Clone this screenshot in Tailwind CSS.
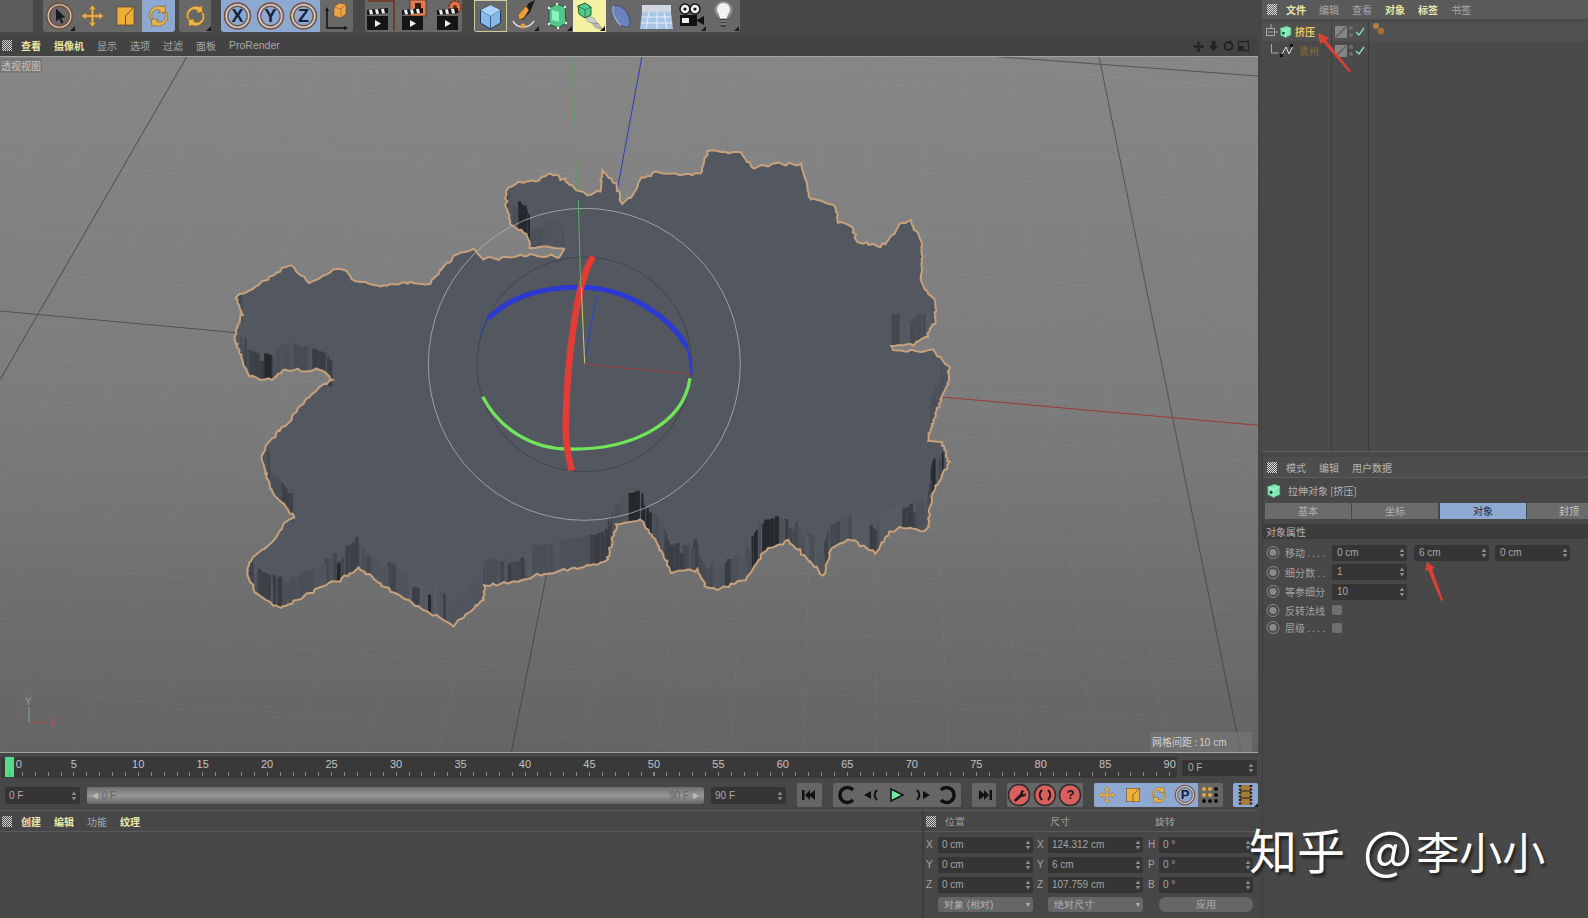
<!DOCTYPE html>
<html lang="zh">
<head>
<meta charset="UTF-8">
<title>Cinema 4D</title>
<script src="https://cdn.jsdelivr.net/npm/@tailwindcss/browser@4"></script>
</head>
<body class="w-[1588px] h-[918px] overflow-hidden relative bg-[#474747] font-['Noto_Sans_CJK_SC','Liberation_Sans',sans-serif] text-[10px] text-[#a9a9a9]">

<!-- shared icons -->
<svg width="0" height="0" class="absolute">
  <defs>
    <symbol id="cross" viewBox="0 0 33 32"><path d="M16.5 5l3.5 4.5h-2.2v5.2H23V12.500l4.500 3.500-4.500 3.500v-2.200h-5.200v5.200H20L16.500 27 13 22.500h2.200v-5.200H10v2.200L5.500 16 10 12.500v2.200h5.200V9.500H13z" fill="#eab04e" stroke="#8a6426" stroke-width=".5"/></symbol>
    <symbol id="scale" viewBox="0 0 33 32"><rect x="8" y="7" width="17" height="18" fill="#eeae3c" stroke="#5a4420" stroke-width=".7"/><path d="M16.500 25v-9L25 7" fill="none" stroke="#6b5020" stroke-width="1"/></symbol>
    <symbol id="rotate" viewBox="0 0 33 32"><path d="M8 19a9.500 9.500 0 0 1 13-12l2-2 .8 8-7.300-.5 2-1.800A5 5 0 0 0 12 20z" fill="#e9b44c" stroke="#76592a" stroke-width=".6"/><path d="M25 13a9.500 9.500 0 0 1-13 12l-2 2-.8-8 7.300.5-2 1.800A5 5 0 0 0 21 12z" fill="#e9b44c" stroke="#76592a" stroke-width=".6"/></symbol>
    <symbol id="ring" viewBox="0 0 33 32"><circle cx="16.500" cy="16" r="13" fill="none" stroke="#7e4f37" stroke-width="1.500"/><circle cx="16.500" cy="16" r="11.300" fill="none" stroke="#d8d0c0" stroke-width="1.100"/><circle cx="16.500" cy="16" r="9.700" fill="none" stroke="#7e4f37" stroke-width="1.200"/></symbol>
    <symbol id="clap" viewBox="0 0 33 32"><rect x="2" y="16" width="21" height="14" fill="#151515"/><path d="M2 10l21-2v5l-21 2z" fill="#151515"/><path d="M4 10l3-.3 1 4.600-3 .3zM10 9.500l3-.3 1 4.500-3 .3zM16 9l3-.3 1 4.500-3 .3z" fill="#eee"/><path d="M10 20l6 3.500-6 3.500z" fill="#eee"/></symbol>
    <symbol id="spin" viewBox="0 0 6 10"><path d="M3 .5L5.300 4H.7zM3 9.500L.7 6h4.600z" fill="#8d8d8d"/></symbol>
    <symbol id="redbtn" viewBox="0 0 24 24"><circle cx="12" cy="12" r="10.500" fill="#d9605e" stroke="#2a2a2a" stroke-width="1.500"/></symbol>
    <symbol id="greencube" viewBox="0 0 14 14"><path d="M1.500 3.500L8 1l5 2v8l-6 2.500-5.500-2.500z" fill="#7ee8b0" stroke="#3f8a62" stroke-width=".6"/><path d="M1.500 3.500L7 6l6-3M7 6v7.500" fill="none" stroke="#b8f6d4" stroke-width=".7"/><path d="M3.500 7.500h2.500v2.500H3.500z" fill="#20382c"/></symbol>
    <symbol id="corner" viewBox="0 0 33 32"><path d="M32 31h-5l5-5z" fill="#1c1c1c"/></symbol>
  </defs>
</svg>

<div class="flex h-full">
  <!-- left column -->
  <div class="w-[1258px] shrink-0 flex flex-col">
    <!-- top toolbar -->
    <div class="h-[36px] bg-[#484848] flex items-start pl-0 text-[#111]">
      <div class="w-[33px] h-[32px] bg-[#5d5d5d] rounded-br-[3px]"></div>
      <div class="flex ml-[10px] rounded-b-[3px] overflow-hidden">
        <div class="relative w-[33px] h-[32px] bg-[#686868]">
          <svg width="33" height="32" class="absolute inset-0"><use href="#ring"/><path d="M13 8.500l9.500 9-4.200.3 2.200 5-2 .9-2.200-5-3.300 2.700z" fill="#1a1a1a"/><use href="#corner"/></svg>
        </div>
        <div class="w-[33px] h-[32px] bg-[#686868]"><svg width="33" height="32"><use href="#cross"/></svg></div>
        <div class="w-[33px] h-[32px] bg-[#686868]"><svg width="33" height="32"><use href="#scale"/></svg></div>
        <div class="w-[33px] h-[32px] bg-[#8ea9d1]"><svg width="33" height="32"><use href="#rotate"/></svg></div>
      </div>
      <div class="w-[32px] h-[32px] ml-[4px] bg-[#686868] rounded-b-[3px]"><svg width="33" height="32"><use href="#rotate"/><use href="#corner"/></svg></div>
      <div class="flex ml-[10px] rounded-b-[3px] overflow-hidden">
        <div class="relative w-[33px] h-[32px] bg-[#8ea9d1] flex items-center justify-center font-bold text-[18px] font-['Liberation_Sans'] text-[#10223c]"><svg width="33" height="32" class="absolute inset-0"><use href="#ring"/></svg><span class="relative">X</span></div>
        <div class="relative w-[33px] h-[32px] bg-[#8ea9d1] flex items-center justify-center font-bold text-[18px] font-['Liberation_Sans'] text-[#10223c]"><svg width="33" height="32" class="absolute inset-0"><use href="#ring"/></svg><span class="relative">Y</span></div>
        <div class="relative w-[33px] h-[32px] bg-[#8ea9d1] flex items-center justify-center font-bold text-[18px] font-['Liberation_Sans'] text-[#10223c]"><svg width="33" height="32" class="absolute inset-0"><use href="#ring"/></svg><span class="relative">Z</span></div>
        <div class="w-[33px] h-[32px] bg-[#686868]"><svg width="33" height="32"><path d="M7 9v19h19" fill="none" stroke="#111" stroke-width="1.500"/><path d="M7 7l-2 4h4zM28 28l-4-2v4z" fill="#111"/><path d="M14 7l5-4 7 1v10l-5 4-7-2z" fill="#eba44a" stroke="#6a4a1e" stroke-width=".6"/><path d="M14 7l7 2 5-5M21 9v9" fill="none" stroke="#8a5e24" stroke-width=".6"/></svg></div>
      </div>
      <div class="flex ml-[12px] rounded-b-[3px] overflow-hidden">
        <div class="w-[35px] h-[32px] bg-[#686868]"><svg width="33" height="32"><path d="M3 1h26v30" fill="none" stroke="#6f3d2c" stroke-width="2"/><use href="#clap"/></svg></div>
        <div class="w-[35px] h-[32px] bg-[#686868]"><svg width="33" height="32"><rect x="10" y="0" width="16" height="16" fill="#e07a4f" stroke="#222" stroke-width=".6"/><rect x="15" y="3" width="6" height="7" fill="#3a1a10"/><use href="#clap"/></svg></div>
        <div class="w-[27px] h-[32px] bg-[#686868]"><svg width="27" height="32"><circle cx="20" cy="7" r="6" fill="#e0764a" stroke="#7a3a20" stroke-width="1.800" stroke-dasharray="2.500 1.200"/><circle cx="20" cy="7" r="2" fill="#5a2c18"/><use href="#clap" width="33" height="32"/></svg></div>
      </div>
      <div class="flex ml-[12px] rounded-b-[3px] overflow-hidden">
        <div class="w-[33px] h-[32px] bg-[#686868] border border-[#cfc8a0]"><svg width="31" height="30"><path d="M15.500 4l10 5v13l-10 6-10-6V9z" fill="#86b8e8" stroke="#22364e" stroke-width="1"/><path d="M5.500 9l10 6 10-6M15.500 15v13" fill="none" stroke="#2a4664" stroke-width=".8"/><path d="M15.500 4l10 5-10 6-10-6z" fill="#a8d0f4"/></svg></div>
        <div class="w-[33px] h-[32px] bg-[#686868]"><svg width="33" height="32"><path d="M22 3l6-3-5 12-7 8-4-4z" fill="#1a1a1a"/><path d="M19 6l-8 9 1 5 5-2 5-8z" fill="#e8a03c" stroke="#6a3a10" stroke-width=".6"/><path d="M6 21c4 8 16 8 21 0" fill="none" stroke="#eee" stroke-width="1.400"/><circle cx="16" cy="26" r="2.500" fill="#e3a341"/><use href="#corner"/></svg></div>
        <div class="w-[33px] h-[32px] bg-[#686868]"><svg width="33" height="32"><path d="M9 8l8-4 8 3 1 16-8 5-9-4z" fill="#52c68a" stroke="#1f5a3e"/><path d="M12 10l7 2v10l-7-2z" fill="#8ef0bc"/><g fill="#eee"><circle cx="9" cy="8" r="1.200"/><circle cx="17" cy="4" r="1.200"/><circle cx="25" cy="7" r="1.200"/><circle cx="26" cy="23" r="1.200"/><circle cx="18" cy="28" r="1.200"/><circle cx="9" cy="24" r="1.200"/></g><use href="#corner"/></svg></div>
        <div class="w-[33px] h-[32px] bg-[#f4f2a2]"><svg width="33" height="32"><path d="M16 20l9 3 4 6-6-1z" fill="#bbb" stroke="#555" stroke-width=".4"/><path d="M12 15l9 3 3 6-9-2z" fill="#ccc" stroke="#666" stroke-width=".4"/><path d="M5 6l7-3 6 4v8l-6 3-6-4z" fill="#55c98b" stroke="#1f5a3e"/><path d="M5 6l7 4 6-3M12 10v8" fill="none" stroke="#1f5a3e" stroke-width=".7"/><use href="#corner"/></svg></div>
        <div class="w-[34px] h-[32px] bg-[#686868]"><svg width="33" height="32"><path d="M8 6c7-3 17 8 16 18-1 4-5 4-9 1C9 21 5 10 8 6z" fill="#6c82bc" stroke="#2c3860" stroke-width=".7"/><path d="M8 6c-3 4 1 15 7 19" fill="none" stroke="#9fb2e0" stroke-width="1.300"/></svg></div>
        <div class="w-[34px] h-[32px] bg-[#686868]"><svg width="33" height="32"><path d="M2 12h29V5H2z" fill="#cfd6de"/><path d="M2 12h29l2 17H0z" fill="#a9c6e8"/><path d="M2 17h29M1 23h31M9 12L6 29M17 12v17M24 12l3 17" stroke="#eef2f8" stroke-width=".9" fill="none"/></svg></div>
        <div class="w-[33px] h-[32px] bg-[#686868]"><svg width="33" height="32"><circle cx="11" cy="9" r="5" fill="#eee" stroke="#111" stroke-width="1.500"/><circle cx="21" cy="9" r="5" fill="#eee" stroke="#111" stroke-width="1.500"/><circle cx="11" cy="9" r="1.600" fill="#111"/><circle cx="21" cy="9" r="1.600" fill="#111"/><rect x="6" y="15" width="17" height="11" fill="#111"/><rect x="8" y="18" width="7" height="5" fill="#eee"/><path d="M23 20l7-4v9l-7-4z" fill="#111"/><use href="#corner"/></svg></div>
        <div class="w-[33px] h-[32px] bg-[#686868]"><svg width="33" height="32"><circle cx="16.500" cy="10" r="9" fill="#fff" opacity=".25"/><path d="M16.500 3c4.500 0 6.500 3.500 6.500 6.500 0 3.500-3 5-3 9h-7c0-4-3-5.500-3-9C10 6.500 12 3 16.500 3z" fill="#f2f2f2"/><path d="M13.500 19h6v6l-1.500 2h-3l-1.500-2z" fill="#3a3a3a"/><path d="M13.500 21h6M13.500 24h6" stroke="#bbb"/><use href="#corner"/></svg></div>
      </div>
    </div>

    <!-- viewport menu -->
    <div class="h-[20px] bg-[#434343] flex items-center pb-[1px]">
      <div class="w-[10px] h-[11px] ml-[2px] bg-[conic-gradient(#d8d8d8_25%,transparent_0_50%,#d8d8d8_0_75%,transparent_0)] bg-[length:2px_2px]"></div>
      <div class="flex gap-[13px] ml-[9px] flex-1 items-center">
        <span class="text-[#e9e6a8] font-bold">查看</span>
        <span class="text-[#e9e6a8] font-bold">摄像机</span>
        <span>显示</span><span>选项</span><span>过滤</span><span>面板</span><span class="font-['Liberation_Sans'] text-[10.500px]">ProRender</span>
      </div>
      <div class="flex gap-[2px] pr-[8px]">
        <svg width="13" height="12"><path d="M6.500 1l2 2.500H7.300v2h2V4.300L12 6.500 9.300 8.700V7.500h-2v2h1.200l-2 2.500-2-2.500h1.200v-2h-2v1.200L1 6.500l2.700-2.200v1.200h2v-2H4.500z" fill="#222"/></svg>
        <svg width="13" height="12"><path d="M6.500 11L2 6h2.500V1h4v5H11z" fill="#222"/></svg>
        <svg width="13" height="12"><circle cx="6.500" cy="6" r="4" fill="none" stroke="#222" stroke-width="1.800"/><path d="M9 0v4H6" fill="#222"/></svg>
        <svg width="13" height="12"><rect x="1.500" y="1.500" width="10" height="9" fill="none" stroke="#222" stroke-width="1.200"/><rect x="1.500" y="6" width="5" height="4.500" fill="#222"/></svg>
      </div>
    </div>

    <!-- viewport -->
    <div class="relative h-[697px] border-t border-b border-[#a4a4a4] bg-gradient-to-b from-[#868686] via-[#7c7c7c] to-[#646464] overflow-hidden">
      <svg id="scene" width="1258" height="695" viewBox="0 57 1258 695" class="absolute inset-0">
        <defs><clipPath id="mapclip"><path id="clipshape"/></clipPath></defs>
        <g id="grid" transform="scale(1.01276)" stroke="#ffffff" stroke-opacity=".04" stroke-width="1"></g>
        <g transform="scale(1.01276)" fill="none" stroke-width="1">
          <path d="M185 55L0 375M0 307L240 329M972 55L1242 75M1085 55L1225 742M540 565L505 742" stroke="#333333" stroke-opacity=".6"/>
          <path d="M930 392L1242 420" stroke="#9c3a3a"/>
          <path d="M634 55L610 185" stroke="#2f3fb4"/>
          <path d="M565 55L572 250" stroke="#5a9c5a" stroke-opacity=".8"/>
        </g>
        <!-- extruded map shape, coordinates from a 750x500 crop at 220,140 -->
        <g transform="translate(220 140) scale(.478 .3333)">
          <path id="mapfill" fill="#525760"/>
          <g id="walls" clip-path="url(#mapclip)"></g>
          <path id="mapline" fill="none" stroke="#c6a17c" stroke-width="2" vector-effect="non-scaling-stroke"/>
        </g>
        <!-- gizmo, coordinates from a 330x330 crop at 420,200 -->
        <g transform="translate(420 200) scale(.3333)" fill="none">
          <circle cx="493" cy="493" r="468" stroke="#b8bab8" stroke-opacity=".75" stroke-width="3"/>
          <circle cx="493" cy="493" r="322" stroke="#3e4146" stroke-width="2.500"/>
          <path d="M493 493L810 522" stroke="#9c3f45" stroke-width="3"/>
          <path d="M497 470L530 285" stroke="#3447b0" stroke-width="4"/>
          <path d="M180 405C190 385 195 370 205 355" stroke="#3444a0" stroke-width="4"/>
          <path d="M205 355C260 300 350 262 480 262C620 262 750 350 800 440" stroke="#2c39d4" stroke-width="15"/>
          <path d="M798 436C808 460 813 490 815 522" stroke="#2c39d4" stroke-width="7"/>
          <path d="M188 590C240 690 340 747 445 747C620 752 790 680 810 535" stroke="#72e45a" stroke-width="10"/>
          <path d="M520 170C470 240 440 480 437 680C437 740 450 790 456 812" stroke="#e23c36" stroke-width="20"/>
          <path d="M475 0L482 262" stroke="#5fae62" stroke-width="3"/>
          <path d="M484 262L494 490" stroke="#d8c860" stroke-width="3"/>
        </g>
        <!-- world axis -->
        <g fill="none" stroke-width="1.200">
          <path d="M29 722V707" stroke="#7f9a8f"/>
          <path d="M29 722L46 723" stroke="#b05050"/>
        </g>
      </svg>
      <div class="absolute left-0 top-[1px] h-[15px] px-[1px] bg-[#777777] rounded-br-[2px] text-[#c6c6c6] leading-[15px]">透视视图</div>
      <div class="absolute left-[25px] top-[640px] text-[#8aa2a0] font-['Liberation_Sans'] leading-none">Y</div>
      <div class="absolute left-[49px] top-[661px] text-[#b05858] font-['Liberation_Sans'] leading-none">X</div>
      <div class="absolute right-[6px] bottom-0 h-[20px] w-[102px] bg-[#7a7a7a]/60 text-[#d0d0d0] leading-[20px] pl-[2px]">网格间距 : <span class="font-['Liberation_Sans']">10 cm</span></div>
    </div>

    <!-- timeline ruler -->
    <div class="h-[28px] pt-[4px] bg-[#474747] flex items-start">
      <div class="relative ml-[1px] w-[1176px] shrink-0 h-[21px] bg-[#393939] overflow-hidden">
        <div class="absolute left-[4px] top-0 w-[9px] h-[20px] bg-[#57d98a]"></div>
        <div class="flex ml-[-24px] h-[14px] items-center font-['Liberation_Sans'] text-[#c2c2c2] text-[11px]">
          <span class="w-[64.47px] shrink-0 text-center pl-[19px]">0</span><span class="w-[64.47px] shrink-0 text-center">5</span><span class="w-[64.47px] shrink-0 text-center">10</span><span class="w-[64.47px] shrink-0 text-center">15</span><span class="w-[64.47px] shrink-0 text-center">20</span><span class="w-[64.47px] shrink-0 text-center">25</span><span class="w-[64.47px] shrink-0 text-center">30</span><span class="w-[64.47px] shrink-0 text-center">35</span><span class="w-[64.47px] shrink-0 text-center">40</span><span class="w-[64.47px] shrink-0 text-center">45</span><span class="w-[64.47px] shrink-0 text-center">50</span><span class="w-[64.47px] shrink-0 text-center">55</span><span class="w-[64.47px] shrink-0 text-center">60</span><span class="w-[64.47px] shrink-0 text-center">65</span><span class="w-[64.47px] shrink-0 text-center">70</span><span class="w-[64.47px] shrink-0 text-center">75</span><span class="w-[64.47px] shrink-0 text-center">80</span><span class="w-[64.47px] shrink-0 text-center">85</span><span class="w-[64.47px] shrink-0 text-center">90</span>
        </div>
        <div class="absolute left-[8px] right-[5px] bottom-[2px] h-[4px] bg-[repeating-linear-gradient(90deg,#8a8a8a_0,#8a8a8a_1px,transparent_1px,transparent_12.89px)]"></div>
      </div>
      <div class="relative ml-[5px] w-[75px] h-[16px] mt-[3px] rounded-[2px] bg-[#353535] pl-[6px] leading-[16px] font-['Liberation_Sans'] text-[#aaa]">0 F<svg width="6" height="10" class="absolute right-[3px] top-[3px]"><use href="#spin"/></svg></div>
    </div>

    <!-- transport row -->
    <div class="h-[30px] bg-[#474747] flex items-center border-b border-[#5c5c5c] pb-[1px] font-['Liberation_Sans']">
      <div class="relative ml-[5px] w-[75px] h-[17px] rounded-[2px] bg-[#353535] pl-[4px] leading-[17px] text-[#aaa]">0 F<svg width="6" height="10" class="absolute right-[3px] top-[4px]"><use href="#spin"/></svg></div>
      <div class="ml-[7px] w-[617px] h-[17px] rounded-[3px] bg-gradient-to-b from-[#6d6d6d] via-[#979797] to-[#666666] flex items-center justify-between px-[4px] text-[#666666]">
        <span><span class="text-[#bdbdbd] text-[8px]">◀</span> 0 F</span><span>90 F <span class="text-[#bdbdbd] text-[8px]">▶</span></span>
      </div>
      <div class="relative ml-[7px] w-[75px] h-[17px] rounded-[2px] bg-[#353535] pl-[4px] leading-[17px] text-[#aaa]">90 F<svg width="6" height="10" class="absolute right-[3px] top-[4px]"><use href="#spin"/></svg></div>

      <div class="ml-[11px] w-[25px] h-[24px] bg-[#666666] rounded-[2px]"><svg width="25" height="24"><path d="M5 7h2.500v10H5zM13 7v4l5-4v10l-5-4v4l-5-5z" fill="#111"/></svg></div>
      <div class="flex ml-[11px] rounded-[2px] overflow-hidden h-[24px]">
        <div class="w-[26px] bg-[#666666]"><svg width="26" height="24"><path d="M20 7a7.500 7.500 0 1 0 0 10" fill="none" stroke="#111" stroke-width="3.500"/></svg></div>
        <div class="w-[25px] bg-[#666666]"><svg width="25" height="24"><path d="M5 12l7-4v8z" fill="#111"/><path d="M18 7c-3 3-3 7 0 10" fill="none" stroke="#111" stroke-width="2"/></svg></div>
        <div class="w-[26px] bg-[#666666]"><svg width="26" height="24"><path d="M7 6l12 6-12 6z" fill="#71e89e" stroke="#111" stroke-width="1.500"/></svg></div>
        <div class="w-[25px] bg-[#666666]"><svg width="25" height="24"><path d="M7 7c3 3 3 7 0 10" fill="none" stroke="#111" stroke-width="2"/><path d="M20 12l-7-4v8z" fill="#111"/></svg></div>
        <div class="w-[26px] bg-[#666666]"><svg width="26" height="24"><path d="M6 7a7.500 7.500 0 1 1 0 10" fill="none" stroke="#111" stroke-width="3.500"/></svg></div>
      </div>
      <div class="ml-[11px] w-[24px] h-[24px] bg-[#666666] rounded-[2px]"><svg width="25" height="24"><path d="M20 7h-2.500v10H20zM12 7v4L7 7v10l5-4v4l5-5z" fill="#111"/></svg></div>
      <div class="flex ml-[11px] rounded-[2px] overflow-hidden h-[24px]">
        <div class="w-[25px] bg-[#666666]"><svg width="25" height="24" viewBox="0 0 25 24"><use href="#redbtn" width="24" height="24"/><path d="M7 17l6-6 1.500-4 3 1-2 2 1.500 1.500 2-1.500-.5 3-4 1-6 5z" fill="#1a1a1a"/></svg></div>
        <div class="w-[26px] bg-[#666666]"><svg width="26" height="24"><use href="#redbtn" width="24" height="24" x="1"/><path d="M10 7c-3 3-3 7 0 10M16 7c3 3 3 7 0 10" fill="none" stroke="#1a1a1a" stroke-width="2"/></svg></div>
        <div class="w-[25px] bg-[#666666] relative flex items-center justify-center font-bold text-[13px] text-[#1a1a1a]"><svg width="25" height="24" class="absolute inset-0"><use href="#redbtn" width="24" height="24"/></svg><span class="relative">?</span></div>
      </div>
      <div class="flex ml-[11px] rounded-[2px] overflow-hidden h-[24px]">
        <div class="w-[26px] bg-[#8ea9d1]"><svg width="26" height="24" viewBox="0 0 33 32"><use href="#cross"/></svg></div>
        <div class="w-[26px] bg-[#8ea9d1]"><svg width="26" height="24" viewBox="0 0 33 32"><use href="#scale"/></svg></div>
        <div class="w-[26px] bg-[#8ea9d1]"><svg width="26" height="24" viewBox="0 0 33 32"><use href="#rotate"/></svg></div>
        <div class="w-[26px] bg-[#8ea9d1] relative flex items-center justify-center font-bold text-[13px] text-[#10223c]"><svg width="26" height="24" viewBox="0 0 33 32" class="absolute inset-0"><use href="#ring"/></svg><span class="relative">P</span></div>
        <div class="w-[25px] bg-[#666666]"><svg width="25" height="24"><g fill="#e3a341"><circle cx="6" cy="6" r="2"/><circle cx="12" cy="6" r="2"/><circle cx="6" cy="12" r="2"/><circle cx="12" cy="12" r="2"/></g><g fill="#111"><circle cx="18" cy="6" r="2"/><circle cx="18" cy="12" r="2"/><circle cx="6" cy="18" r="2"/><circle cx="12" cy="18" r="2"/><circle cx="18" cy="18" r="2"/></g></svg></div>
      </div>
      <div class="ml-[10px] w-[25px] h-[24px] bg-[#8ea9d1] rounded-[2px]"><svg width="25" height="24"><rect x="7" y="2" width="11" height="20" fill="#a87a3c"/><path d="M7 2v20M18 2v20" stroke="#222" stroke-width="2.500" stroke-dasharray="2 1.500"/><path d="M7 8h11M7 15h11" stroke="#222" stroke-width="1.200"/><path d="M25 24h-4l4-4z" fill="#1c1c1c"/></svg></div>
    </div>

    <!-- bottom panels -->
    <div class="flex-1 flex">
      <div class="w-[924px] flex flex-col border-r-2 border-[#3d3d3d]">
        <div class="h-[21px] flex items-center border-b border-[#5a5a5a]">
          <div class="w-[10px] h-[11px] ml-[2px] bg-[conic-gradient(#d8d8d8_25%,transparent_0_50%,#d8d8d8_0_75%,transparent_0)] bg-[length:2px_2px]"></div>
          <div class="flex gap-[13px] ml-[9px] items-center">
            <span class="text-[#e9e6a8] font-bold">创建</span>
            <span class="text-[#e9e6a8] font-bold">编辑</span>
            <span>功能</span>
            <span class="text-[#e9e6a8] font-bold">纹理</span>
          </div>
        </div>
      </div>
      <div class="flex-1 flex flex-col font-['Liberation_Sans']">
        <div class="h-[21px] flex items-center border-b border-[#5a5a5a]">
          <div class="w-[10px] h-[11px] ml-[2px] bg-[conic-gradient(#d8d8d8_25%,transparent_0_50%,#d8d8d8_0_75%,transparent_0)] bg-[length:2px_2px]"></div>
          <span class="ml-[9px] w-[105px]">位置</span><span class="w-[105px]">尺寸</span><span>旋转</span>
        </div>
        <div class="grid grid-cols-[12px_95px_15px_95px_16px_94px] gap-y-[4px] pl-[2px] pt-[5px] items-center leading-[16px] text-[#a4a4a4]">
          <span>X</span><div class="relative h-[16px] rounded-[2px] bg-[#353535] pl-[4px]">0 cm<svg width="6" height="10" class="absolute right-[2px] top-[3px]"><use href="#spin"/></svg></div>
          <span class="pl-[4px]">X</span><div class="relative h-[16px] rounded-[2px] bg-[#353535] pl-[4px]">124.312 cm<svg width="6" height="10" class="absolute right-[2px] top-[3px]"><use href="#spin"/></svg></div>
          <span class="pl-[5px]">H</span><div class="relative h-[16px] rounded-[2px] bg-[#353535] pl-[4px]">0 °<svg width="6" height="10" class="absolute right-[2px] top-[3px]"><use href="#spin"/></svg></div>
          <span>Y</span><div class="relative h-[16px] rounded-[2px] bg-[#353535] pl-[4px]">0 cm<svg width="6" height="10" class="absolute right-[2px] top-[3px]"><use href="#spin"/></svg></div>
          <span class="pl-[4px]">Y</span><div class="relative h-[16px] rounded-[2px] bg-[#353535] pl-[4px]">6 cm<svg width="6" height="10" class="absolute right-[2px] top-[3px]"><use href="#spin"/></svg></div>
          <span class="pl-[5px]">P</span><div class="relative h-[16px] rounded-[2px] bg-[#353535] pl-[4px]">0 °<svg width="6" height="10" class="absolute right-[2px] top-[3px]"><use href="#spin"/></svg></div>
          <span>Z</span><div class="relative h-[16px] rounded-[2px] bg-[#353535] pl-[4px]">0 cm<svg width="6" height="10" class="absolute right-[2px] top-[3px]"><use href="#spin"/></svg></div>
          <span class="pl-[4px]">Z</span><div class="relative h-[16px] rounded-[2px] bg-[#353535] pl-[4px]">107.759 cm<svg width="6" height="10" class="absolute right-[2px] top-[3px]"><use href="#spin"/></svg></div>
          <span class="pl-[5px]">B</span><div class="relative h-[16px] rounded-[2px] bg-[#353535] pl-[4px]">0 °<svg width="6" height="10" class="absolute right-[2px] top-[3px]"><use href="#spin"/></svg></div>
          <span></span><div class="relative h-[15px] rounded-[3px] bg-[#666666] pl-[6px] leading-[15px] text-[#b4b4b4]">对象 (相对)<span class="absolute right-[3px] top-0 text-[8px]">▾</span></div>
          <span></span><div class="relative h-[15px] rounded-[3px] bg-[#666666] pl-[6px] leading-[15px] text-[#b4b4b4]">绝对尺寸<span class="absolute right-[3px] top-0 text-[8px]">▾</span></div>
          <span></span><div class="h-[15px] rounded-[7px] bg-[#666666] text-center leading-[15px] text-[#b4b4b4]">应用</div>
        </div>
      </div>
    </div>
  </div>

  <!-- right column -->
  <div class="ml-[4px] flex-1 flex flex-col">
    <!-- object manager -->
    <div class="h-[452px] flex flex-col bg-[#4a4a4a] border-b border-[#5f5f5f]">
      <div class="h-[19px] bg-[#5a5a5a] flex items-center">
        <div class="w-[10px] h-[11px] ml-[5px] bg-[conic-gradient(#e0e0e0_25%,transparent_0_50%,#e0e0e0_0_75%,transparent_0)] bg-[length:2px_2px]"></div>
        <div class="flex gap-[13px] ml-[9px] items-center">
          <span class="text-[#e9e6a8] font-bold">文件</span><span>编辑</span><span>查看</span>
          <span class="text-[#e9e6a8] font-bold">对象</span><span class="text-[#e9e6a8] font-bold">标签</span><span>书签</span>
        </div>
      </div>
      <div class="flex-1 flex pt-[3px]">
        <div class="w-[70px] border-r border-[#3c3c3c]">
          <div class="h-[19px] bg-[#515151] flex items-center pl-[3px]">
            <svg width="13" height="16" class="shrink-0"><path d="M6 0v4M10 8h3" stroke="#aaa"/><rect x="1.500" y="4.500" width="8" height="7" fill="none" stroke="#aaa"/><path d="M3 8h5" stroke="#aaa"/></svg>
            <svg width="13" height="13" class="ml-[1px] shrink-0"><use href="#greencube"/></svg>
            <span class="ml-[3px] text-[#eec161] font-bold">挤压</span>
          </div>
          <div class="h-[19px] flex items-center pl-[9px]">
            <svg width="8" height="14" class="shrink-0"><path d="M.5 0v9h7" fill="none" stroke="#aaa"/></svg>
            <svg width="15" height="13" class="ml-[1px] shrink-0"><path d="M1 12L6 3l3 7 4-8" fill="none" stroke="#e4e4e4" stroke-width="1"/><path d="M0 10h3v3H0zM10 0h3v3h-3z" fill="#111"/></svg>
            <span class="ml-[4px] text-[#90702c]">贵州</span>
          </div>
        </div>
        <div class="w-[37px] border-r border-[#3c3c3c]">
          <div class="h-[19px] bg-[#515151] flex items-center pl-[3px] gap-[2px]">
            <svg width="12" height="12"><rect width="12" height="12" rx="1" fill="#858585"/><path d="M1 11L11 1" stroke="#5a5a5a" stroke-width="1.500"/></svg>
            <svg width="4" height="14"><circle cx="2" cy="3" r="2" fill="#6d6d6d"/><circle cx="2" cy="10" r="2" fill="#6d6d6d"/></svg>
            <svg width="10" height="10"><path d="M1 5l3 3 5-7" fill="none" stroke="#8ce0b4" stroke-width="1.300"/></svg>
          </div>
          <div class="h-[19px] flex items-center pl-[3px] gap-[2px]">
            <svg width="12" height="12"><rect width="12" height="12" rx="1" fill="#858585"/><path d="M1 11L11 1" stroke="#5a5a5a" stroke-width="1.500"/></svg>
            <svg width="4" height="14"><circle cx="2" cy="3" r="2" fill="#6d6d6d"/><circle cx="2" cy="10" r="2" fill="#6d6d6d"/></svg>
            <svg width="10" height="10"><path d="M1 5l3 3 5-7" fill="none" stroke="#8ce0b4" stroke-width="1.300"/></svg>
          </div>
        </div>
        <div class="flex-1">
          <div class="h-[19px] bg-[#515151] pl-[2px]"><svg width="16" height="16"><circle cx="5" cy="4" r="3" fill="#b07f3d"/><circle cx="10" cy="9" r="3.300" fill="#a86f30"/></svg></div>
        </div>
      </div>
    </div>

    <!-- attribute manager -->
    <div class="flex-1 bg-[#484848] border-l border-[#3d3d3d] pt-[5px]">
      <div class="h-[21px] flex items-center bg-[#4d4d4d] border-b border-[#5c5c5c]">
        <div class="w-[10px] h-[11px] ml-[4px] bg-[conic-gradient(#e0e0e0_25%,transparent_0_50%,#e0e0e0_0_75%,transparent_0)] bg-[length:2px_2px]"></div>
        <div class="flex gap-[13px] ml-[9px] items-center text-[#b4b4b4]"><span>模式</span><span>编辑</span><span>用户数据</span></div>
      </div>
      <div class="h-[25px] flex items-center pl-[3px]">
        <svg width="15" height="15" class="shrink-0"><use href="#greencube"/></svg>
        <span class="ml-[7px] text-[#b4b4b4]">拉伸对象 [挤压]</span>
      </div>
      <div class="h-[16px] flex gap-[1px] pl-[2px] text-center leading-[16px] overflow-hidden">
        <div class="w-[86px] shrink-0 bg-[#6b6b6b] text-[#b0b0b0]">基本</div>
        <div class="w-[86px] shrink-0 bg-[#6b6b6b] text-[#b0b0b0]">坐标</div>
        <div class="w-[86px] shrink-0 bg-[#8ea9d1] text-[#1a2638] ml-[1px]">对象</div>
        <div class="w-[86px] shrink-0 bg-[#6b6b6b] text-[#c4c4c4] pl-[32px] text-left">封顶</div>
      </div>
      <div class="mt-[5px] h-[15px] bg-[#3c3c3c] pl-[3px] leading-[15px] text-[#b4b4b4]">对象属性</div>
      <div class="mt-[4px] flex flex-col text-[#a2a2a2]">
        <div class="h-[19px] flex items-center pl-[3px]">
          <svg width="15" height="15" class="shrink-0"><circle cx="7" cy="7.500" r="6" fill="none" stroke="#8c8c8c"/><circle cx="7" cy="7.500" r="3.600" fill="#8a8a8a"/></svg>
          <span class="ml-[4px] w-[47px] shrink-0 whitespace-nowrap overflow-hidden">移动 . . . .</span>
          <div class="relative w-[75px] h-[16px] rounded-[2px] bg-[#353535] pl-[5px] leading-[16px] font-['Liberation_Sans'] text-[#a8a8a8]">0 cm<svg width="6" height="10" class="absolute right-[2px] top-[3px]"><use href="#spin"/></svg></div>
          <div class="relative ml-[7px] w-[75px] h-[16px] rounded-[2px] bg-[#353535] pl-[5px] leading-[16px] font-['Liberation_Sans'] text-[#a8a8a8]">6 cm<svg width="6" height="10" class="absolute right-[2px] top-[3px]"><use href="#spin"/></svg></div>
          <div class="relative ml-[6px] w-[75px] h-[16px] rounded-[2px] bg-[#353535] pl-[5px] leading-[16px] font-['Liberation_Sans'] text-[#a8a8a8]">0 cm<svg width="6" height="10" class="absolute right-[2px] top-[3px]"><use href="#spin"/></svg></div>
        </div>
        <div class="h-[20px] flex items-center pl-[3px]">
          <svg width="15" height="15" class="shrink-0"><circle cx="7" cy="7.500" r="6" fill="none" stroke="#8c8c8c"/><circle cx="7" cy="7.500" r="3.600" fill="#8a8a8a"/></svg>
          <span class="ml-[4px] w-[47px] shrink-0 whitespace-nowrap overflow-hidden">细分数 . .</span>
          <div class="relative w-[75px] h-[16px] rounded-[2px] bg-[#353535] pl-[5px] leading-[16px] font-['Liberation_Sans'] text-[#a8a8a8]">1<svg width="6" height="10" class="absolute right-[2px] top-[3px]"><use href="#spin"/></svg></div>
        </div>
        <div class="h-[19px] flex items-center pl-[3px]">
          <svg width="15" height="15" class="shrink-0"><circle cx="7" cy="7.500" r="6" fill="none" stroke="#8c8c8c"/><circle cx="7" cy="7.500" r="3.600" fill="#8a8a8a"/></svg>
          <span class="ml-[4px] w-[47px] shrink-0 whitespace-nowrap overflow-hidden">等参细分</span>
          <div class="relative w-[75px] h-[16px] rounded-[2px] bg-[#353535] pl-[5px] leading-[16px] font-['Liberation_Sans'] text-[#a8a8a8]">10<svg width="6" height="10" class="absolute right-[2px] top-[3px]"><use href="#spin"/></svg></div>
        </div>
        <div class="h-[18px] flex items-center pl-[3px]">
          <svg width="15" height="15" class="shrink-0"><circle cx="7" cy="7.500" r="6" fill="none" stroke="#8c8c8c"/><circle cx="7" cy="7.500" r="3.600" fill="#8a8a8a"/></svg>
          <span class="ml-[4px] w-[47px] shrink-0 whitespace-nowrap overflow-hidden">反转法线</span>
          <div class="w-[10px] h-[10px] rounded-[2px] bg-[#6f6f6f]"></div>
        </div>
        <div class="h-[17px] flex items-center pl-[3px]">
          <svg width="15" height="15" class="shrink-0"><circle cx="7" cy="7.500" r="6" fill="none" stroke="#8c8c8c"/><circle cx="7" cy="7.500" r="3.600" fill="#8a8a8a"/></svg>
          <span class="ml-[4px] w-[47px] shrink-0 whitespace-nowrap overflow-hidden">层级 . . . .</span>
          <div class="w-[10px] h-[10px] rounded-[2px] bg-[#6f6f6f]"></div>
        </div>
      </div>
    </div>
  </div>
</div>

<!-- annotations on top of the screenshot -->
<svg width="1588" height="918" class="absolute inset-0 pointer-events-none">
  <path d="M1318 33l11 5-3 2 25 31-2 1-26-30-3 2z" fill="#dd3f30"/>
  <path d="M1427 562l8 6-3 1 11 31-2 1-13-31-3 1z" fill="#dd3f30"/>
</svg>
<div class="absolute left-[1249px] top-[815px] flex items-baseline leading-[64px] text-white whitespace-nowrap font-['Noto_Sans_CJK_SC',sans-serif] [text-shadow:2px_3px_3px_rgba(0,0,0,0.55)]">
  <span class="text-[48px]">知乎</span><span class="ml-[18px] text-[52px]">@</span><span class="ml-[4px] text-[43px]">李小小</span>
</div>

<script>
  // outline of the map, clockwise
  var pts = [[35,470],[75,440],[105,410],[130,385],[150,378],[170,410],[190,430],[215,410],[240,385],[265,395],[285,428],[320,430],[350,440],[400,425],[440,430],[465,385],[490,345],[530,328],[550,355],[590,355],[650,345],[715,350],[722,332],[700,322],[650,325],[640,280],[610,255],[600,210],[598,150],[625,128],[660,125],[690,98],[720,120],[745,150],[770,165],[795,150],[800,95],[825,125],[840,190],[860,170],[880,115],[920,95],[970,105],[1005,100],[1020,35],[1050,35],[1090,40],[1115,85],[1160,70],[1215,75],[1235,175],[1285,195],[1295,245],[1325,265],[1330,305],[1380,320],[1405,290],[1425,250],[1445,245],[1470,315],[1465,430],[1497,480],[1497,540],[1480,590],[1450,615],[1405,615],[1410,630],[1440,635],[1490,630],[1525,680],[1525,720],[1505,790],[1480,900],[1510,905],[1525,970],[1490,1060],[1480,1170],[1420,1165],[1400,1180],[1370,1240],[1320,1200],[1280,1220],[1262,1305],[1230,1260],[1190,1200],[1140,1230],[1100,1320],[1040,1350],[1015,1335],[1000,1290],[945,1295],[910,1200],[880,1140],[830,1150],[810,1260],[770,1280],[680,1300],[600,1330],[555,1335],[550,1380],[490,1455],[440,1420],[400,1390],[345,1340],[290,1285],[250,1320],[200,1350],[125,1405],[80,1370],[55,1300],[70,1250],[115,1200],[130,1160],[155,1130],[110,1060],[85,950],[100,905],[140,850],[190,760],[235,720],[215,690],[130,690],[110,720],[60,710],[30,600],[45,520]];
  var seed = 7;
  function rnd() { seed = (seed * 16807) % 2147483647; return seed / 2147483647; }
  var d = "", walls = "", shade = "#4a4f57", h = 60;
  var shades = ["#4a4f57","#474c53","#50555d","#43474e","#565b63","#3d4147","#4c5159","#4a4f57","#3a3e44","#50555d","#25282c"];
  pts.forEach(function (p, i) {
    var q = pts[(i + 1) % pts.length];
    var n = Math.max(1, Math.round(Math.hypot(q[0] - p[0], q[1] - p[1]) / 8));
    for (var k = 0; k < n; k++) {
      var x = p[0] + (q[0] - p[0]) * k / n + (rnd() - .5) * 5;
      var y = p[1] + (q[1] - p[1]) * k / n + (rnd() - .5) * 10;
      d += (d ? "L" : "M") + x.toFixed(1) + " " + y.toFixed(1);
      // faces looking down the screen show the extrusion, keep a shade for a few steps so the facets read wider
      if (q[0] < p[0]) {
        if (rnd() < .4) { shade = shades[Math.floor(rnd() * shades.length)]; h = 50 + rnd() * 45; }
        var w = Math.abs(q[0] - p[0]) / n + 1;
        walls += '<rect x="' + (x - w).toFixed(1) + '" y="' + (y - h).toFixed(1) + '" width="' + w.toFixed(1) + '" height="' + (h + 20).toFixed(1) + '" fill="' + shade + '"/>';
      }
    }
  });
  d += "Z";
  document.getElementById("mapfill").setAttribute("d", d);
  document.getElementById("mapline").setAttribute("d", d);
  document.getElementById("clipshape").setAttribute("d", d);
  document.getElementById("walls").innerHTML = walls;

  var g = "";
  for (var i = -12; i < 16; i++) {
    var x742 = 505 + 72 * i;
    g += '<path d="M850 -1096L' + x742 + ' 742"/>';
  }
  for (var k = -0.5; k < 2.3; k += 0.1) {
    var y0 = 4672 / (4.33 - k) - 1096;
    g += '<path d="M0 ' + y0.toFixed(1) + 'L1242 ' + (y0 + 105).toFixed(1) + '"/>';
  }
  document.getElementById("grid").innerHTML = g;
</script>
</body>
</html>
